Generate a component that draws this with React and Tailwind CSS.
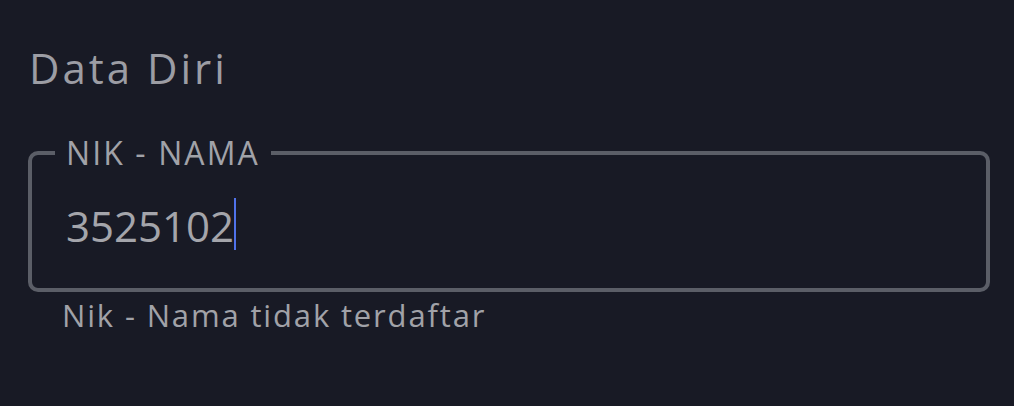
import React from 'react';

const NikField = ({ label, value, helper }) => {
  return (
    <div className="w-full">
      <fieldset className="border-[4px] border-[#5b5e67] rounded-[10px] px-[23px] pb-[38px] pt-0 m-0">
        <legend className="px-[11px] text-[32px] leading-[36px] text-[#a1a2a8] tracking-[2.1px]">
          {label}
        </legend>
        <div className="flex items-start pl-[11px] pt-[27px]">
          <span className="mt-[4px] text-[42px] leading-[48px] text-[#a4a5ab]">{value}</span>
          <span className="w-[2px] h-[52px] bg-[#5072ea]" />
        </div>
      </fieldset>
      <p className="pl-[34px] pt-[3px] text-[31px] leading-[40px] text-[#a1a2a8] tracking-[1.85px]">
        {helper}
      </p>
    </div>
  );
};

export default function App() {
  return (
    <div
      className="w-[1014px] h-[406px] bg-[#181a25] px-[28px] pt-[41px]"
      style={{ fontFamily: '"Open Sans", "Liberation Sans", sans-serif' }}
    >
      {/* Section title */}
      <h2 className="text-[42px] leading-[54px] text-[#9c9da4] pl-[1px] tracking-[3px] mb-[40px]">
        Data Diri
      </h2>

      <div className="w-[962px]">
        <NikField label="NIK - NAMA" value="3525102" helper="Nik - Nama tidak terdaftar" />
      </div>
    </div>
  );
}
